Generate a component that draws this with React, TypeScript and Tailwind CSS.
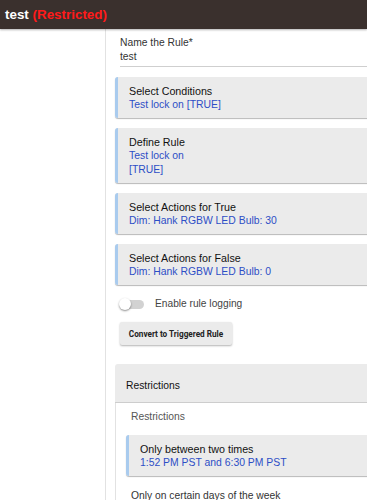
import React from 'react';

interface RuleCardProps {
  title: string;
  lines: string[];
}

function RuleCard({ title, lines }: RuleCardProps) {
  return (
    <div className="flex rounded-l-[3px] bg-[#ebebeb] shadow-[0_1px_1px_rgba(0,0,0,0.28)]">
      <div className="w-[3px] shrink-0 rounded-l-[3px] bg-[#a9cbee]" />
      <div className="pl-[11px] pt-[7px] pb-[6px] leading-[14px]">
        <div className="text-[10.7px] text-[#111]">{title}</div>
        {lines.map((line) => (
          <div key={line} className="text-[10.4px] text-[#2d4ec6]">
            {line}
          </div>
        ))}
      </div>
    </div>
  );
}

export default function App() {
  return (
    <div
      className="w-[367px] h-[500px] overflow-hidden bg-white flex flex-col"
      style={{ fontFamily: '"Liberation Sans", Arial, sans-serif' }}
    >
      <header className="relative z-10 h-[29px] shrink-0 bg-[#3a302d] flex items-center pl-[5px] shadow-[0_1px_2px_rgba(0,0,0,0.3)]">
        <span className="text-[13.4px] font-bold text-white leading-none">
          test <span className="text-[#ff1a1a]">(Restricted)</span>
        </span>
      </header>

      <div className="flex flex-1 min-h-0">
        {/* sidebar */}
        <aside className="w-[106px] shrink-0 border-r border-[#e2e2e2]" />

        {/* main */}
        <main className="w-[320px] shrink-0 pl-[9px] pt-[7px] leading-[14px]">
          <div className="ml-[5px] border-b border-[#cfcfcf] pb-[2px]">
            <div className="text-[10.3px] text-[#333]">Name the Rule*</div>
            <div className="text-[10.3px] text-[#333]">test</div>
          </div>

          <div className="mt-[10px] flex flex-col gap-[10px]">
            <RuleCard title="Select Conditions" lines={['Test lock on [TRUE]']} />
            <RuleCard title="Define Rule" lines={['Test lock on', '[TRUE]']} />
            <RuleCard title="Select Actions for True" lines={['Dim: Hank RGBW LED Bulb: 30']} />
            <RuleCard title="Select Actions for False" lines={['Dim: Hank RGBW LED Bulb: 0']} />
          </div>

          <div className="mt-[12px] ml-[4px] flex items-center h-[14px]">
            <div className="relative w-[25px] h-[12px] flex items-center">
              <div className="ml-[5px] w-[20px] h-[9px] rounded-full bg-[#d2d2d2]" />
              <div className="absolute left-0 top-0 w-[12px] h-[12px] rounded-full bg-white shadow-[0_1px_2px_rgba(0,0,0,0.45)]" />
            </div>
            <span className="ml-[11px] text-[10.2px] text-[#444]">Enable rule logging</span>
          </div>

          <button
            type="button"
            className="mt-[11px] ml-[5px] w-[112px] h-[23px] rounded-[2px] bg-[#ebebeb] shadow-[0_1px_2px_rgba(0,0,0,0.3)] text-[8.2px] font-bold text-[#222] flex items-center justify-center"
            style={{ fontFamily: 'Roboto, "Liberation Sans", sans-serif' }}
          >
            Convert to Triggered Rule
          </button>

          <section className="mt-[19px]">
            <div className="h-[39px] rounded-tl-[3px] bg-[#ebebeb] border-b border-[#cdcdcd] pl-[11px] pt-[15px] text-[10.3px] text-[#111]">
              Restrictions
            </div>
            <div className="border-l border-[#e2e2e2] pl-[10px] pt-[7px]">
              <div className="pl-[5px] text-[10.3px] text-[#555]">Restrictions</div>
              <div className="mt-[11px]">
                <RuleCard title="Only between two times" lines={['1:52 PM PST and 6:30 PM PST']} />
              </div>
              <div className="mt-[13px] pl-[5px] text-[10.3px] text-[#333]">
                Only on certain days of the week
              </div>
            </div>
          </section>
        </main>
      </div>
    </div>
  );
}
